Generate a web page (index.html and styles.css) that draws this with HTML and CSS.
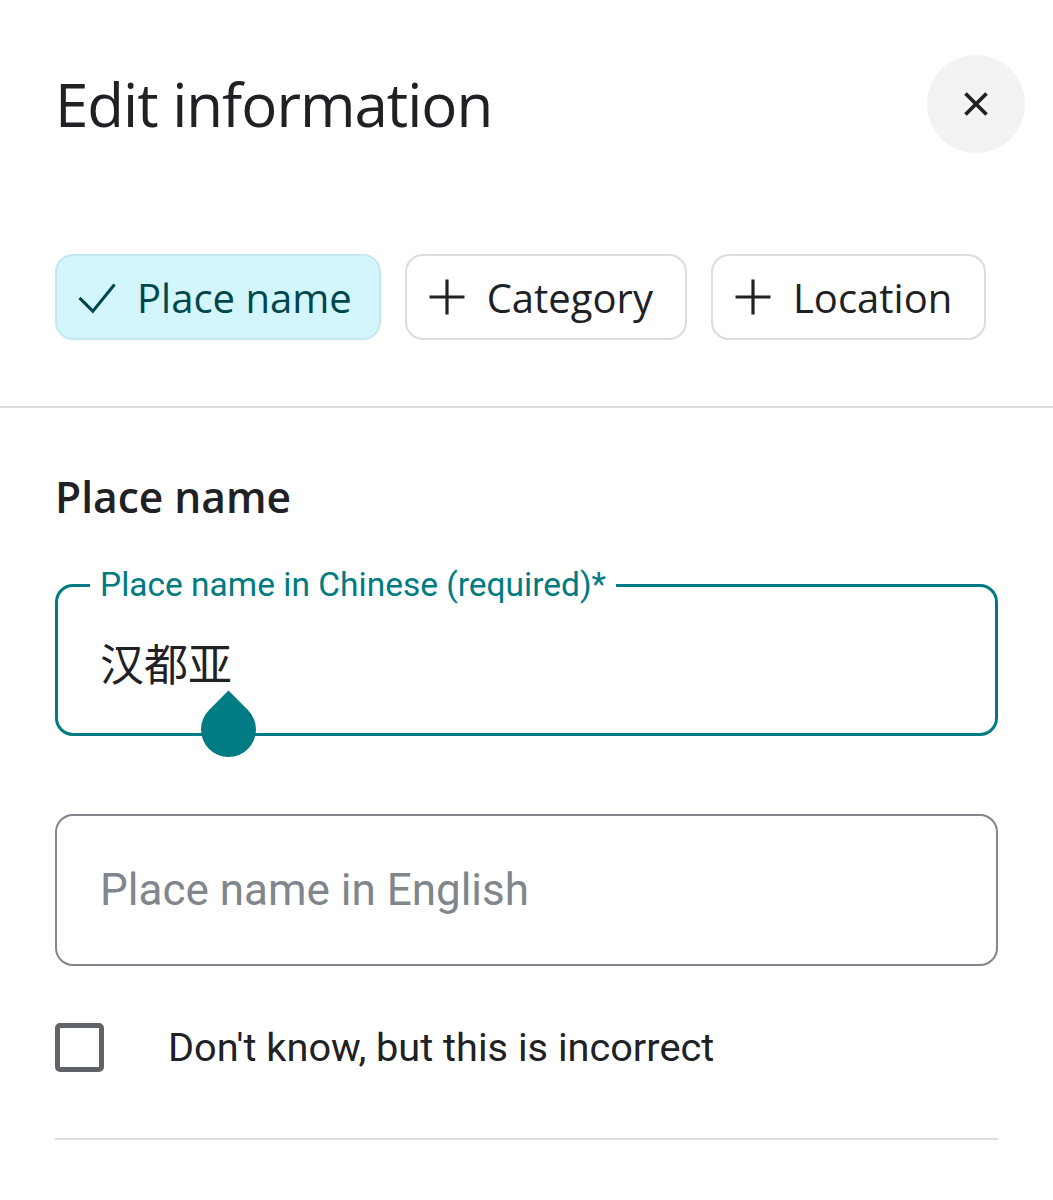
FILE: index.html
```html
<!DOCTYPE html>
<html>
<head>
<title>Edit information</title>
<link rel="stylesheet" href="styles.css">
</head>
<body>
<div class="sheet">
  <div class="header">
    <h1>Edit information</h1>
    <button class="close-button" aria-label="Close">
      <svg width="36" height="36" viewBox="0 0 24 24"><path d="M5 5L19 19M19 5L5 19" stroke="#202124" stroke-width="2.5" fill="none"/></svg>
    </button>
  </div>
  <div class="chips">
    <div class="chip selected">
      <svg width="40" height="40" viewBox="0 0 24 24"><path d="M1.5 12.5L9.5 20.5L22.5 4.5" stroke="#00474d" stroke-width="1.8" fill="none"/></svg>
      <span>Place name</span>
    </div>
    <div class="chip">
      <svg width="40" height="40" viewBox="0 0 24 24"><path d="M12 1.5V22.5M1.5 12H22.5" stroke="#202124" stroke-width="1.9" fill="none"/></svg>
      <span>Category</span>
    </div>
    <div class="chip">
      <svg width="40" height="40" viewBox="0 0 24 24"><path d="M12 1.5V22.5M1.5 12H22.5" stroke="#202124" stroke-width="1.9" fill="none"/></svg>
      <span>Location</span>
    </div>
  </div>
</div>
<div class="divider"></div>
<div class="sheet">
  <h2>Place name</h2>
  <div class="field focused">
    <span class="field-label">Place name in Chinese (required)*</span>
    <span class="field-value">汉都亚</span>
    <div class="handle"></div>
  </div>
  <div class="field">
    <span class="placeholder">Place name in English</span>
  </div>
  <label class="check-row">
    <span class="checkbox"></span>
    <span>Don't know, but this is incorrect</span>
  </label>
  <div class="bottom-line"></div>
</div>
</body>
</html>
```

FILE: styles.css
```css
body {
  margin: 0;
  background-color: white;
  color: #202124;
  font-family: "Open Sans", sans-serif;
}

.sheet {
  padding: 0 55px;
}

.header {
  display: flex;
  justify-content: space-between;
  align-items: center;
  padding-top: 55px;
  height: 98px;
}

.header h1 {
  margin: 0;
  font-size: 60px;
  font-weight: 400;
  letter-spacing: -1px;
}

.close-button {
  width: 98px;
  height: 98px;
  margin-right: -27px;
  border: none;
  border-radius: 50%;
  background-color: #f1f3f4;
  display: flex;
  justify-content: center;
  align-items: center;
}

.chips {
  display: flex;
  gap: 24px;
  margin-top: 101px;
  margin-bottom: 66px;
}

.chip {
  height: 82px;
  padding: 0 32px 0 20px;
  border: 2px solid #dadce0;
  border-radius: 18px;
  display: flex;
  align-items: center;
  gap: 20px;
  font-size: 40px;
  font-weight: 500;
  color: #202124;
}

.chip.selected {
  padding-right: 27px;
  background-color: #d3f5fc;
  border-color: #c4e8ef;
  color: #00474d;
}

.divider {
  height: 2px;
  background-color: #dadce0;
}

h2 {
  margin: 61px 0 0;
  font-size: 42.5px;
  font-weight: 600;
  line-height: 56px;
}

.field {
  position: relative;
  margin-top: 59px;
  height: 148px;
  border: 2px solid #80868b;
  border-radius: 18px;
  display: flex;
  align-items: center;
  padding: 0 43px;
  font-family: Roboto, sans-serif;
}

.field.focused {
  height: 146px;
  border: 3px solid #007b83;
  padding: 0 42px;
}

.field + .field {
  margin-top: 78px;
}

.field-label {
  position: absolute;
  top: -24px;
  left: 32px;
  padding: 0 10px;
  background-color: white;
  color: #007b83;
  font-size: 33.5px;
  line-height: 44px;
}

.field-value {
  font-family: "Noto Sans CJK SC", sans-serif;
  font-size: 44px;
  margin-top: 4px;
}

.handle {
  position: absolute;
  left: 143px;
  top: 115px;
  width: 55px;
  height: 55px;
  background-color: #007b83;
  border-radius: 0 50% 50% 50%;
  transform: rotate(45deg);
}

.placeholder {
  color: #80868b;
  font-size: 44px;
}

.check-row {
  display: flex;
  align-items: center;
  gap: 64px;
  margin-top: 57px;
  font-family: Roboto, sans-serif;
  font-size: 39.7px;
}

.checkbox {
  width: 39px;
  height: 39px;
  border: 5px solid #5f6368;
  border-radius: 5px;
}

.bottom-line {
  margin-top: 66px;
  height: 2px;
  background-color: #dadce0;
}
```
